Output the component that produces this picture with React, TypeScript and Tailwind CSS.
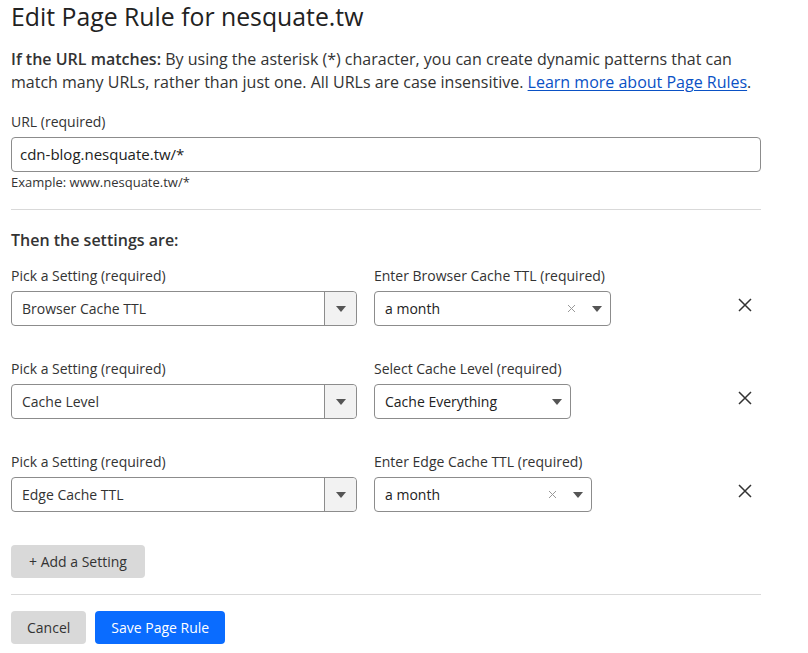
import React from "react";

const font = { fontFamily: '"Open Sans", "Noto Sans", sans-serif' };

function Caret() {
  return (
    <svg width="10" height="6" viewBox="0 0 10 6">
      <path d="M0 0h10L5 6z" fill="#555" />
    </svg>
  );
}

function SmallX() {
  return (
    <svg width="9" height="9" viewBox="0 0 9 9">
      <path d="M1 1l7 7M8 1L1 8" stroke="#999" strokeWidth="1" />
    </svg>
  );
}

function RemoveX() {
  return (
    <svg width="14" height="14" viewBox="0 0 14 14">
      <path d="M1 1l12 12M13 1L1 13" stroke="#333" strokeWidth="1.5" />
    </svg>
  );
}

interface Row {
  setting: string;
  rightLabel: string;
  value: string;
  width: string;
  clearable: boolean;
}

const rows: Row[] = [
  { setting: "Browser Cache TTL", rightLabel: "Enter Browser Cache TTL (required)", value: "a month", width: "w-[237px]", clearable: true },
  { setting: "Cache Level", rightLabel: "Select Cache Level (required)", value: "Cache Everything", width: "w-[197px]", clearable: false },
  { setting: "Edge Cache TTL", rightLabel: "Enter Edge Cache TTL (required)", value: "a month", width: "w-[218px]", clearable: true },
];

export default function App() {
  return (
    <div className="bg-white w-[808px] h-[653px] px-[11px] text-[#222]" style={font}>
      <h1 className="text-[24.8px] leading-[32px] text-[#222]">Edit Page Rule for nesquate.tw</h1>

      <p className="mt-[16px] text-[16px] leading-[23px] text-[#333]">
        <span className="font-semibold">If the URL matches:</span> By using the asterisk (*) character, you can create dynamic patterns that can
        <br />
        match many URLs, rather than just one. All URLs are case insensitive.{" "}
        <a className="text-[#0a51c5] underline underline-offset-2">Learn more about Page Rules</a>.
      </p>

      <div className="mt-[18px] text-[14px] leading-[20px] text-[#333]">URL (required)</div>
      <div className="mt-[5px] w-[750px] h-[35px] border border-[#8c8c8c] rounded-[4px] flex items-center px-[8px] text-[15px] text-[#222]">
        cdn-blog.nesquate.tw/*
      </div>
      <div className="mt-[1px] text-[13px] leading-[18px] text-[#333]">Example: www.nesquate.tw/*</div>

      <div className="mt-[18px] w-[750px] border-t border-[#d9d9d9]" />

      <div className="mt-[19px] text-[16px] leading-[22px] font-semibold text-[#333]">Then the settings are:</div>

      <div className="mt-[15px] flex flex-col gap-[33px]">
        {rows.map((r) => (
          <div key={r.setting} className="flex items-end">
            <div className="w-[346px]">
              <div className="text-[14px] leading-[20px] text-[#333]">Pick a Setting (required)</div>
              <div className="mt-[5px] h-[35px] border border-[#8c8c8c] rounded-[4px] flex text-[14px] text-[#333]">
                <div className="flex-1 flex items-center px-[10px]">{r.setting}</div>
                <div className="w-[32px] border-l border-[#8c8c8c] bg-[#f2f2f2] rounded-r-[4px] flex items-center justify-center">
                  <Caret />
                </div>
              </div>
            </div>
            <div className="ml-[17px] w-[364px]">
              <div className="text-[14px] leading-[20px] text-[#333]">{r.rightLabel}</div>
              <div className={`mt-[5px] h-[35px] ${r.width} border border-[#8c8c8c] rounded-[4px] flex items-center pl-[10px] pr-[8px] text-[14px] text-[#222]`}>
                <span className="flex-1">{r.value}</span>
                {r.clearable && (
                  <span className="mr-[16px] flex items-center">
                    <SmallX />
                  </span>
                )}
                <Caret />
              </div>
            </div>
            <div className="h-[35px] pt-[7px]">
              <RemoveX />
            </div>
          </div>
        ))}
      </div>

      <button className="mt-[33px] h-[33px] px-[18px] rounded-[4px] bg-[#d9d9d9] text-[14px] text-[#333]">+ Add a Setting</button>

      <div className="mt-[16px] w-[750px] border-t border-[#d9d9d9]" />

      <div className="mt-[16px] flex gap-[9px]">
        <button className="h-[33px] px-[16px] rounded-[4px] bg-[#d9d9d9] text-[14px] text-[#333]">Cancel</button>
        <button className="h-[33px] px-[16px] rounded-[4px] bg-[#0a6cff] text-[14px] text-white">Save Page Rule</button>
      </div>
    </div>
  );
}
